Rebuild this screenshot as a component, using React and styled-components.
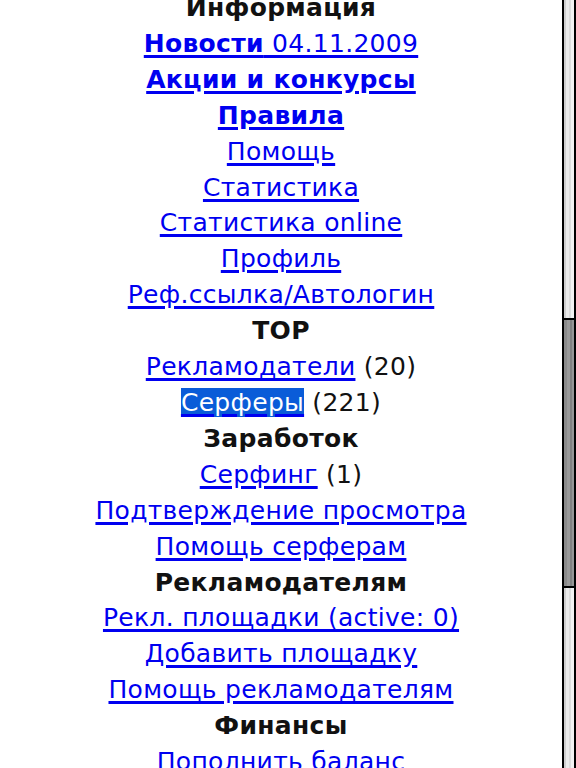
import React from "react";
import styled, { createGlobalStyle } from "styled-components";

const Global = createGlobalStyle`
  html, body {
    margin: 0;
    padding: 0;
    background: #fff;
    overflow: hidden;
  }
  body {
    font-family: "DejaVu Sans", "Liberation Sans", sans-serif;
  }
`;

const Screen = styled.div`
  position: relative;
  width: 576px;
  height: 768px;
  overflow: hidden;
  background: #fff;
`;

const Menu = styled.div`
  width: 562px;
  margin-top: -10px;
  display: flex;
  flex-direction: column;
  align-items: center;
  font-size: 25px;
  line-height: 35.9px;
  letter-spacing: 0.3px;
  color: #000;
`;

const Line = styled.div`
  white-space: nowrap;
  text-align: center;
`;

const Title = styled(Line)`
  font-weight: bold;
  color: #111;
`;

const Link = styled.a`
  color: #0000f0;
  font-weight: ${({ $bold }) => ($bold ? "bold" : "normal")};
  text-decoration: underline;
  text-decoration-thickness: 3px;
  text-underline-offset: 3px;
  background: ${({ $selected }) => ($selected ? "#0a5cd8" : "transparent")};
  ${({ $selected }) => $selected && "color: #fff; text-decoration-color: #0000f0;"}
`;

const Plain = styled.span`
  font-weight: normal;
`;

const Count = styled.span`
  color: #111;
`;

const Scrollbar = styled.div`
  position: absolute;
  top: 0;
  right: 0;
  width: 10px;
  height: 100%;
  border-left: 2px solid #000;
  border-right: 2px solid #000;
  background: linear-gradient(
    to right,
    #cfcfcf 0 2px,
    #ececec 2px 5px,
    #dcdcdc 5px 7px,
    #f2f2f2 7px 10px
  );
`;

const Thumb = styled.div`
  position: absolute;
  left: 0;
  right: 0;
  top: ${({ $top }) => $top}px;
  height: ${({ $height }) => $height}px;
  border-top: 2px solid #000;
  border-bottom: 2px solid #000;
  background: linear-gradient(
    to right,
    #8a8a8a 0 3px,
    #9a9a9a 3px 6px,
    #808080 6px 8px,
    #959595 8px 10px
  );
`;

const items = [
  { type: "title", text: "Информация" },
  { type: "link", text: "Новости", bold: true, extra: " 04.11.2009" },
  { type: "link", text: "Акции и конкурсы", bold: true },
  { type: "link", text: "Правила", bold: true },
  { type: "link", text: "Помощь" },
  { type: "link", text: "Статистика" },
  { type: "link", text: "Статистика online" },
  { type: "link", text: "Профиль" },
  { type: "link", text: "Реф.ссылка/Автологин" },
  { type: "title", text: "TOP" },
  { type: "link", text: "Рекламодатели", count: "(20)" },
  { type: "link", text: "Серферы", count: "(221)", selected: true },
  { type: "title", text: "Заработок" },
  { type: "link", text: "Серфинг", count: "(1)" },
  { type: "link", text: "Подтверждение просмотра" },
  { type: "link", text: "Помощь серферам" },
  { type: "title", text: "Рекламодателям" },
  { type: "link", text: "Рекл. площадки (active: 0)" },
  { type: "link", text: "Добавить площадку" },
  { type: "link", text: "Помощь рекламодателям" },
  { type: "title", text: "Финансы" },
  { type: "link", text: "Пополнить баланс" },
];

export default function App() {
  return (
    <Screen>
      <Global />
      <Menu>
        {items.map((item, i) =>
          item.type === "title" ? (
            <Title key={i}>{item.text}</Title>
          ) : (
            <Line key={i}>
              <Link href="#" $bold={item.bold} $selected={item.selected}>
                {item.text}
                {item.extra && <Plain>{item.extra}</Plain>}
              </Link>
              {item.count && <Count> {item.count}</Count>}
            </Line>
          )
        )}
      </Menu>
      <Scrollbar>
        <Thumb $top={318} $height={266} />
      </Scrollbar>
    </Screen>
  );
}
